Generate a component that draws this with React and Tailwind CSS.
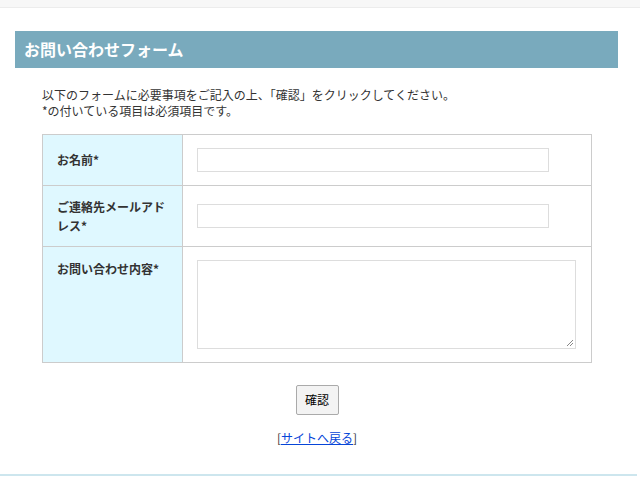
export default function App() {
  const font = { fontFamily: '"Noto Sans CJK JP", "Liberation Sans", sans-serif' };
  return (
    <div className="w-[640px] h-[480px] bg-white relative overflow-hidden" style={font}>
      <div className="h-[8px] bg-[#f7f7f7] border-b border-[#ececec]" />
      <div className="pt-[23px] pr-[22px] pl-[15px]">
        <h1 className="h-[37px] bg-[#79aabd] text-white font-bold text-[16px] leading-[37px] pl-[9px]">
          お問い合わせフォーム
        </h1>
        <div className="pl-[27px] pr-[27px] pt-[19px]">
          <p className="text-[12px] leading-[16px] text-[#333]">
            以下のフォームに必要事項をご記入の上、「確認」をクリックしてください。
            <br />
            *の付いている項目は必須項目です。
          </p>
          <table className="mt-[15px] w-[550px] border-collapse text-[12px] text-[#333]">
            <tbody>
              <tr className="h-[51px]">
                <th className="w-[140px] border border-[#ccc] bg-[#dff8ff] text-left font-bold px-[14px] align-middle">お名前*</th>
                <td className="border border-[#ccc] pl-[14px]">
                  <div className="w-[352px] h-[24px] border border-[#ddd]" />
                </td>
              </tr>
              <tr className="h-[61px]">
                <th className="border border-[#ccc] bg-[#dff8ff] text-left font-bold px-[14px] leading-[19px]">ご連絡先メールアドレス*</th>
                <td className="border border-[#ccc] pl-[14px]">
                  <div className="w-[352px] h-[24px] border border-[#ddd]" />
                </td>
              </tr>
              <tr className="h-[116px]">
                <th className="border border-[#ccc] bg-[#dff8ff] text-left font-bold px-[14px] pt-[13px] align-top">お問い合わせ内容*</th>
                <td className="border border-[#ccc] pl-[14px] pt-[13px] align-top">
                  <div className="w-[379px] h-[89px] border border-[#ddd] relative">
                    <svg className="absolute right-[1px] bottom-[1px]" width="8" height="8" viewBox="0 0 8 8">
                      <path d="M7 1 L1 7 M7 4 L4 7" stroke="#888" strokeWidth="1" />
                    </svg>
                  </div>
                </td>
              </tr>
            </tbody>
          </table>
          <div className="w-[550px] flex flex-col items-center">
            <button className="mt-[22px] w-[43px] h-[30px] border border-[#aaa] rounded-[2px] bg-[#f3f3f3] text-[12px] font-normal text-black">確認</button>
            <div className="mt-[14px] text-[12px] text-[#333]">
              [<a className="text-[#0645d8] underline">サイトへ戻る</a>]
            </div>
          </div>
        </div>
      </div>
      <div className="absolute left-0 right-[3px] bottom-[4px] h-[2px] bg-[#cde6ee]" />
    </div>
  );
}
